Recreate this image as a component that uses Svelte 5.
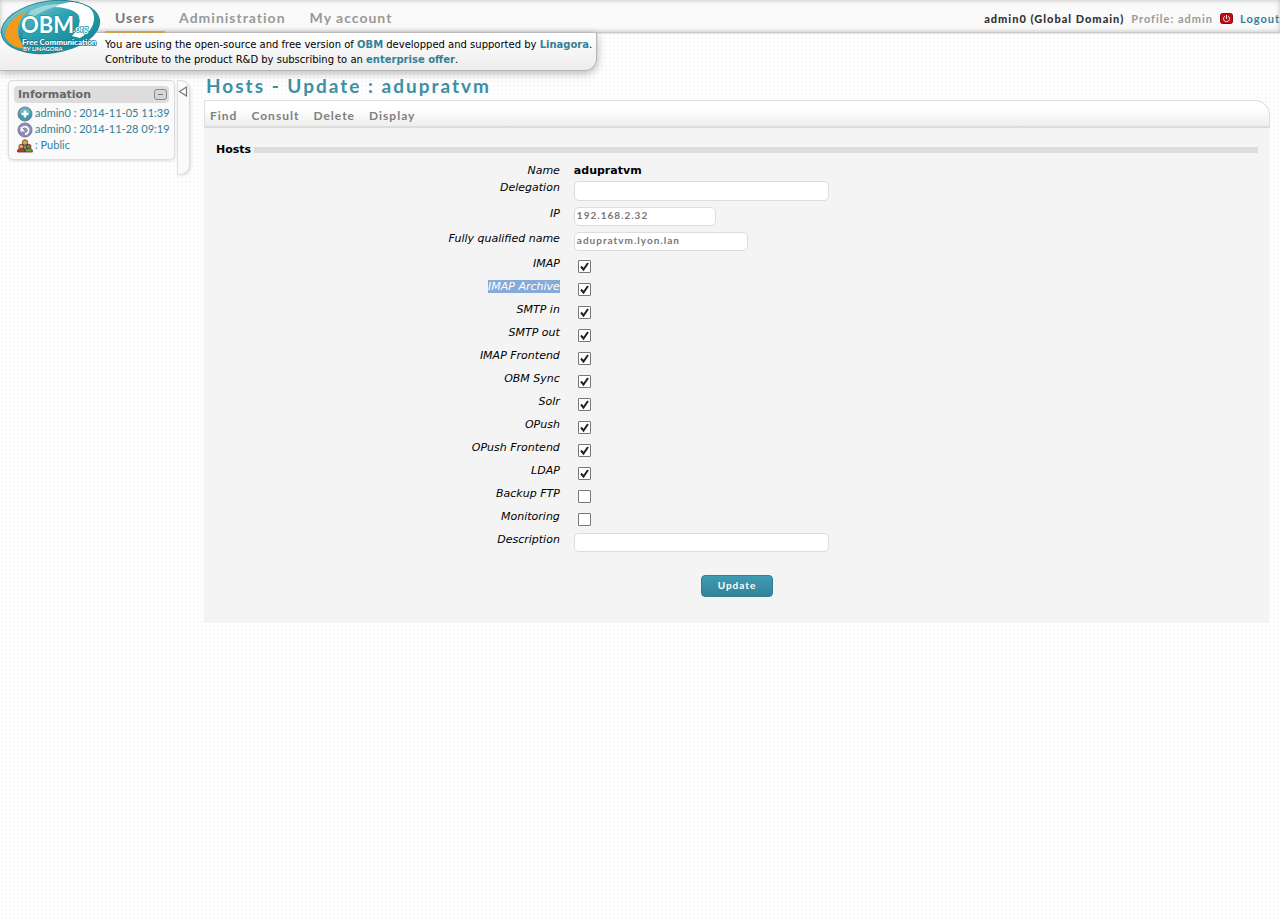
<script>
  const menu = ['Find', 'Consult', 'Delete', 'Display'];
  const services = $state([
    { id: 'imap', label: 'IMAP', on: true },
    { id: 'imap-archive', label: 'IMAP Archive', on: true, highlighted: true },
    { id: 'smtp-in', label: 'SMTP in', on: true },
    { id: 'smtp-out', label: 'SMTP out', on: true },
    { id: 'imap-frontend', label: 'IMAP Frontend', on: true },
    { id: 'obm-sync', label: 'OBM Sync', on: true },
    { id: 'solr', label: 'Solr', on: true },
    { id: 'opush', label: 'OPush', on: true },
    { id: 'opush-frontend', label: 'OPush Frontend', on: true },
    { id: 'ldap', label: 'LDAP', on: true },
    { id: 'backup-ftp', label: 'Backup FTP', on: false },
    { id: 'monitoring', label: 'Monitoring', on: false }
  ]);
  let delegation = $state('');
  let ip = $state('192.168.2.32');
  let fqdn = $state('adupratvm.lyon.lan');
  let description = $state('');
</script>

<header class="topbar">
  <nav class="sections">
    <a class="current" href="#users">Users</a>
    <a href="#administration">Administration</a>
    <a href="#account">My account</a>
  </nav>
  <div class="session">
    <strong>admin0 (Global Domain)</strong>
    <span class="profile">Profile: admin</span>
    <svg class="power" viewBox="0 0 13 11" width="13" height="11" aria-hidden="true">
      <rect x="0.5" y="0.5" width="12" height="10" rx="2" fill="#c40c14" stroke="#85090d" />
      <path d="M4.8 3.2a3 3 0 1 0 3.4 0M6.5 2v4" fill="none" stroke="#fff" stroke-width="0.9" />
    </svg>
    <a href="#logout">Logout</a>
  </div>
</header>

<aside class="banner">
  <p>You are using the open-source and free version of <a href="#obm">OBM</a> developped and supported by <a href="#linagora">Linagora</a>.</p>
  <p>Contribute to the product R&amp;D by subscribing to an <a href="#offer">enterprise offer</a>.</p>
</aside>

<svg class="logo" viewBox="0 0 102 56" width="102" height="56" role="img" aria-label="OBM.org Free Communication by Linagora">
  <defs>
    <linearGradient id="sea" x1="0" y1="0" x2="1" y2="1">
      <stop offset="0" stop-color="#a5d9df" />
      <stop offset="0.45" stop-color="#2ba3b0" />
      <stop offset="1" stop-color="#087b8e" />
    </linearGradient>
    <linearGradient id="core" x1="0" y1="0" x2="0" y2="1">
      <stop offset="0" stop-color="#6fc6cd" />
      <stop offset="1" stop-color="#0f8596" />
    </linearGradient>
    <clipPath id="oval"><ellipse cx="50.500" cy="27" rx="49" ry="25.500" transform="rotate(-8 50.5 27)" /></clipPath>
  </defs>
  <ellipse cx="50.500" cy="27" rx="50" ry="26.500" transform="rotate(-8 50.5 27)" fill="#2d8194" />
  <g clip-path="url(#oval)">
    <rect width="102" height="56" fill="url(#sea)" />
    <path d="M5 36Q6 20 27 11Q16 22 18 34Q19 43 29 49Q10 49 5 36Z" fill="#f59a1b" />
    <path d="M27 11Q46 2 68 4Q44 9 30 22Q20 32 23 44Q13 30 27 11Z" fill="url(#core)" />
    <path d="M30 11Q46 3 64 4Q42 9 26 22Z" fill="#c4e8ea" opacity="0.6" />
    <path d="M55 7Q68 0 80 3Q95 7 94 20Q93 31 80 38L72 36Q82 25 79 16Q74 8 55 7Z" fill="#fff" />
  </g>
  <g font-family="Lato, sans-serif" font-weight="700" fill="#fff" stroke="#1c93a2" stroke-width="1.500" paint-order="stroke" stroke-linejoin="round">
    <text x="21" y="33" font-size="22">OBM</text>
    <text x="73" y="32" font-size="9">.org</text>
  </g>
  <g font-family="Lato, sans-serif" font-weight="900" fill="#fff" stroke="#1b7088" stroke-width="1.500" paint-order="stroke" stroke-linejoin="round">
    <text x="22" y="45" font-size="8">Free Communication</text>
    <text x="23" y="51" font-size="6" font-weight="700" stroke-width="1">BY LINAGORA</text>
  </g>
</svg>

<div class="page">
  <aside class="side">
    <section class="info">
      <h2>
        Information
        <button type="button" aria-label="Collapse">
          <svg viewBox="0 0 13 11" width="13" height="11"><rect x="0.5" y="0.5" width="12" height="10" rx="2.500" fill="#d6d6d6" stroke="#888" /><path d="M4 5.500h5" stroke="#777" /></svg>
        </button>
      </h2>
      <ul>
        <li>
          <svg viewBox="0 0 16 16" width="16" height="16"><circle cx="8" cy="8" r="7" fill="#3c9ab0" stroke="#6f7d82" /><path d="M2.500 7a5.500 5.500 0 0 1 11 0q-5 2-11 0" fill="#fff" opacity="0.25" /><path d="M8 4.500v7M4.500 8h7" stroke="#fff" stroke-width="2.500" /></svg>
          <a href="#creator">admin0 : 2014-11-05 11:39</a>
        </li>
        <li>
          <svg viewBox="0 0 16 16" width="16" height="16"><circle cx="8" cy="8" r="7" fill="#8f8db5" stroke="#777687" /><path d="M5 6a3.700 3.700 0 1 1 3 6" fill="none" stroke="#fff" stroke-width="1.800" /><path d="M3.500 4.500v5h4.500z" fill="#fff" /></svg>
          <a href="#updater">admin0 : 2014-11-28 09:19</a>
        </li>
        <li>
          <svg viewBox="0 0 16 16" width="16" height="16">
            <g stroke="#4a3428" stroke-width="0.800">
              <path d="M4 9q0-3 4-3t4 3v3H4z" fill="#5793b5" /><circle cx="8" cy="4.500" r="2.700" fill="#e8a13f" />
              <path d="M0.600 14q-.3-4 3.600-4t4 4z" fill="#e02c25" /><circle cx="4.200" cy="8.600" r="2.300" fill="#eba653" />
              <path d="M8 14q-.2-4 3.700-4t3.700 4z" fill="#66a52f" /><circle cx="11.700" cy="8.600" r="2.300" fill="#a8683b" />
            </g>
          </svg>
          <a href="#visibility">: Public</a>
        </li>
      </ul>
    </section>
    <button type="button" class="handle" aria-label="Hide panel">
      <svg viewBox="0 0 10 11" width="10" height="11"><path d="M8.500 1v9L1.500 5.500z" fill="#fff" stroke="#777" stroke-width="1.200" /></svg>
    </button>
  </aside>

  <main>
    <h1>Hosts - Update : adupratvm</h1>
    <nav class="tools">
      {#each menu as item}
        <a href={'#' + item.toLowerCase()}>{item}</a>
      {/each}
    </nav>
    <form class="panel" onsubmit={(e) => e.preventDefault()}>
      <h3>Hosts</h3>
      <div class="row name"><span class="label">Name</span><strong>adupratvm</strong></div>
      <div class="row first"><label for="delegation">Delegation</label><input id="delegation" class="wide" type="text" bind:value={delegation} /></div>
      <div class="row"><label for="ip">IP</label><input id="ip" class="short" type="text" bind:value={ip} /></div>
      <div class="row"><label for="fqdn">Fully qualified name</label><input id="fqdn" class="medium" type="text" bind:value={fqdn} /></div>
      {#each services as service}
        <div class="row check">
          <label for={service.id}><span class:highlighted={service.highlighted}>{service.label}</span></label>
          <input id={service.id} type="checkbox" bind:checked={service.on} />
        </div>
      {/each}
      <div class="row"><label for="description">Description</label><input id="description" class="wide" type="text" bind:value={description} /></div>
      <button type="submit" class="submit">Update</button>
    </form>
  </main>
</div>

<style>
  :global(body) {
    background: #fff url("data:image/svg+xml,%3Csvg xmlns='http://www.w3.org/2000/svg' width='4' height='4'%3E%3Cpath d='M0 2h1v1h-1zM1 1h1v1h-1zM2 0h1v1h-1zM1 2h1v1h-1zM2 1h1v1h-1z' fill='%23f7f7f7'/%3E%3C/svg%3E");
    color: #000;
    font: 11px/13px "DejaVu Sans", sans-serif;
  }
  :global(#app) { position: relative; }
  a { color: #338097; text-decoration: none; }
  h1, h2, h3, p, ul { margin: 0; padding: 0; }
  ul { list-style: none; }

  .topbar {
    display: flex;
    justify-content: space-between;
    height: 33px;
    box-sizing: border-box;
    padding-left: 105px;
    background: #fafafa;
    border-bottom: 1px solid #ccc;
    box-shadow: inset 0 0 5px rgba(0, 0, 0, 0.25), 0 1px 1px rgba(0, 0, 0, 0.08);
    font-family: Lato, sans-serif;
    font-weight: 700;
    letter-spacing: 1px;
  }
  .sections { display: flex; gap: 4px; }
  .sections a {
    padding: 0 10px;
    border-bottom: 2px solid transparent;
    color: #999;
    font-size: 14px;
    line-height: 36px;
    height: 33px;
    box-sizing: border-box;
  }
  .sections a.current { color: #777; border-color: #dcae5c; }
  .session { display: flex; align-items: center; gap: 7px; padding-top: 4px; font-size: 11px; }
  .session strong { color: #333; }
  .session .profile { color: #999; }

  .banner {
    position: relative;
    width: fit-content;
    box-sizing: border-box;
    height: 38px;
    padding: 4px 4px 0 105px;
    border: solid #b5b5b5;
    border-width: 0 1px 1px 0;
    border-radius: 0 0 12px 0;
    background: linear-gradient(#fff, #ececec);
    box-shadow: 0 2px 8px rgba(0, 0, 0, 0.3);
    font-size: 10px;
    line-height: 15px;
  }
  .banner a { font-weight: 700; }
  .logo { position: absolute; left: 0; top: 0; }

  .page { display: flex; gap: 14px; padding: 2px 11px 0 8px; }
  .side { display: flex; align-items: flex-start; gap: 2px; margin-top: 7px; }
  .info {
    width: 167px;
    height: 80px;
    box-sizing: border-box;
    padding: 5px;
    border: 1px solid #ddd;
    border-radius: 5px;
    background: #fafafa;
    box-shadow: 0 1px 3px rgba(0, 0, 0, 0.12);
  }
  .info h2 {
    display: flex;
    align-items: center;
    justify-content: space-between;
    height: 17px;
    padding: 0 2px 0 4px;
    border-radius: 4px;
    background: #ddd;
    color: #666;
    font-size: 11px;
  }
  .info h2 button { display: flex; padding: 0; border: 0; background: none; }
  .info ul { padding: 3px 0 0 3px; }
  .info li { display: flex; gap: 2px; height: 16px; font: 11px/13px Lato, sans-serif; white-space: nowrap; }
  .info li svg { flex: none; }
  .handle {
    display: flex;
    justify-content: flex-start;
    width: 13px;
    height: 95px;
    padding: 5px 0 0;
    border: 1px solid #ddd;
    border-radius: 0 10px 10px 0;
    background: #fafafa;
    box-shadow: 1px 1px 3px rgba(0, 0, 0, 0.12);
  }
  main { flex: 1; }
  h1 { padding: 0 0 2px 2px; color: #3c90a6; font: 700 19px/25px Lato, sans-serif; letter-spacing: 2px; }
  .tools {
    display: flex;
    gap: 14px;
    height: 28px;
    box-sizing: border-box;
    margin-right: -1px;
    padding: 0 5px;
    border: 1px solid #ddd;
    border-bottom-width: 2px;
    border-radius: 0 15px 0 0;
    background: linear-gradient(#fff 30%, #eee);
    font: 700 12px/29px Lato, sans-serif;
    letter-spacing: 1px;
  }
  .tools a { color: #808080; }
  .panel { padding: 14px 11px 26px 12px; background: #f4f4f4; }
  .panel h3 { display: flex; align-items: center; gap: 3px; height: 15px; margin-bottom: 7px; font-size: 11px; }
  .panel h3::after { content: ''; flex: 1; height: 6px; background: #ddd; }
  .row {
    display: grid;
    grid-template-columns: 33% 1fr;
    column-gap: 14px;
    align-items: start;
    justify-items: start;
    height: 25px;
  }
  .row.name { height: 17px; }
  .row.first { height: 26px; }
  .row.check { height: 23px; }
  .label, label { justify-self: end; font-style: italic; }
  .highlighted { background: #86abd9; color: #fff; }
  input[type='text'] {
    box-sizing: border-box;
    height: 19px;
    padding: 0 2px 3px;
    border: 1px solid #ddd;
    border-radius: 5px;
    background: #fff;
    color: #777;
    font: 700 10px/13px Lato, sans-serif;
    letter-spacing: 1px;
  }
  .row.first input[type='text'] { height: 20px; }
  .wide { width: 255px; }
  .medium { width: 174px; }
  .short { width: 142px; }
  input[type='checkbox'] {
    appearance: none;
    width: 13px;
    height: 13px;
    margin: 3px 4px;
    border: 1px solid #777;
    border-radius: 1px;
    background: #fff;
  }
  input[type='checkbox']:checked {
    background: #fff url("data:image/svg+xml,%3Csvg xmlns='http://www.w3.org/2000/svg' width='11' height='11'%3E%3Cpath d='M2 5.500L4.500 8.500L9 2' fill='none' stroke='%23222' stroke-width='2'/%3E%3C/svg%3E") center no-repeat;
  }
  .submit {
    display: block;
    width: 72px;
    height: 22px;
    margin: 17px auto 0;
    padding: 0 0 2px;
    border: 1px solid #337f93;
    border-radius: 4px;
    background: linear-gradient(#3f9bb2, #35839a);
    color: #fff;
    font: 700 10px/18px Lato, sans-serif;
    letter-spacing: 1px;
  }
</style>
